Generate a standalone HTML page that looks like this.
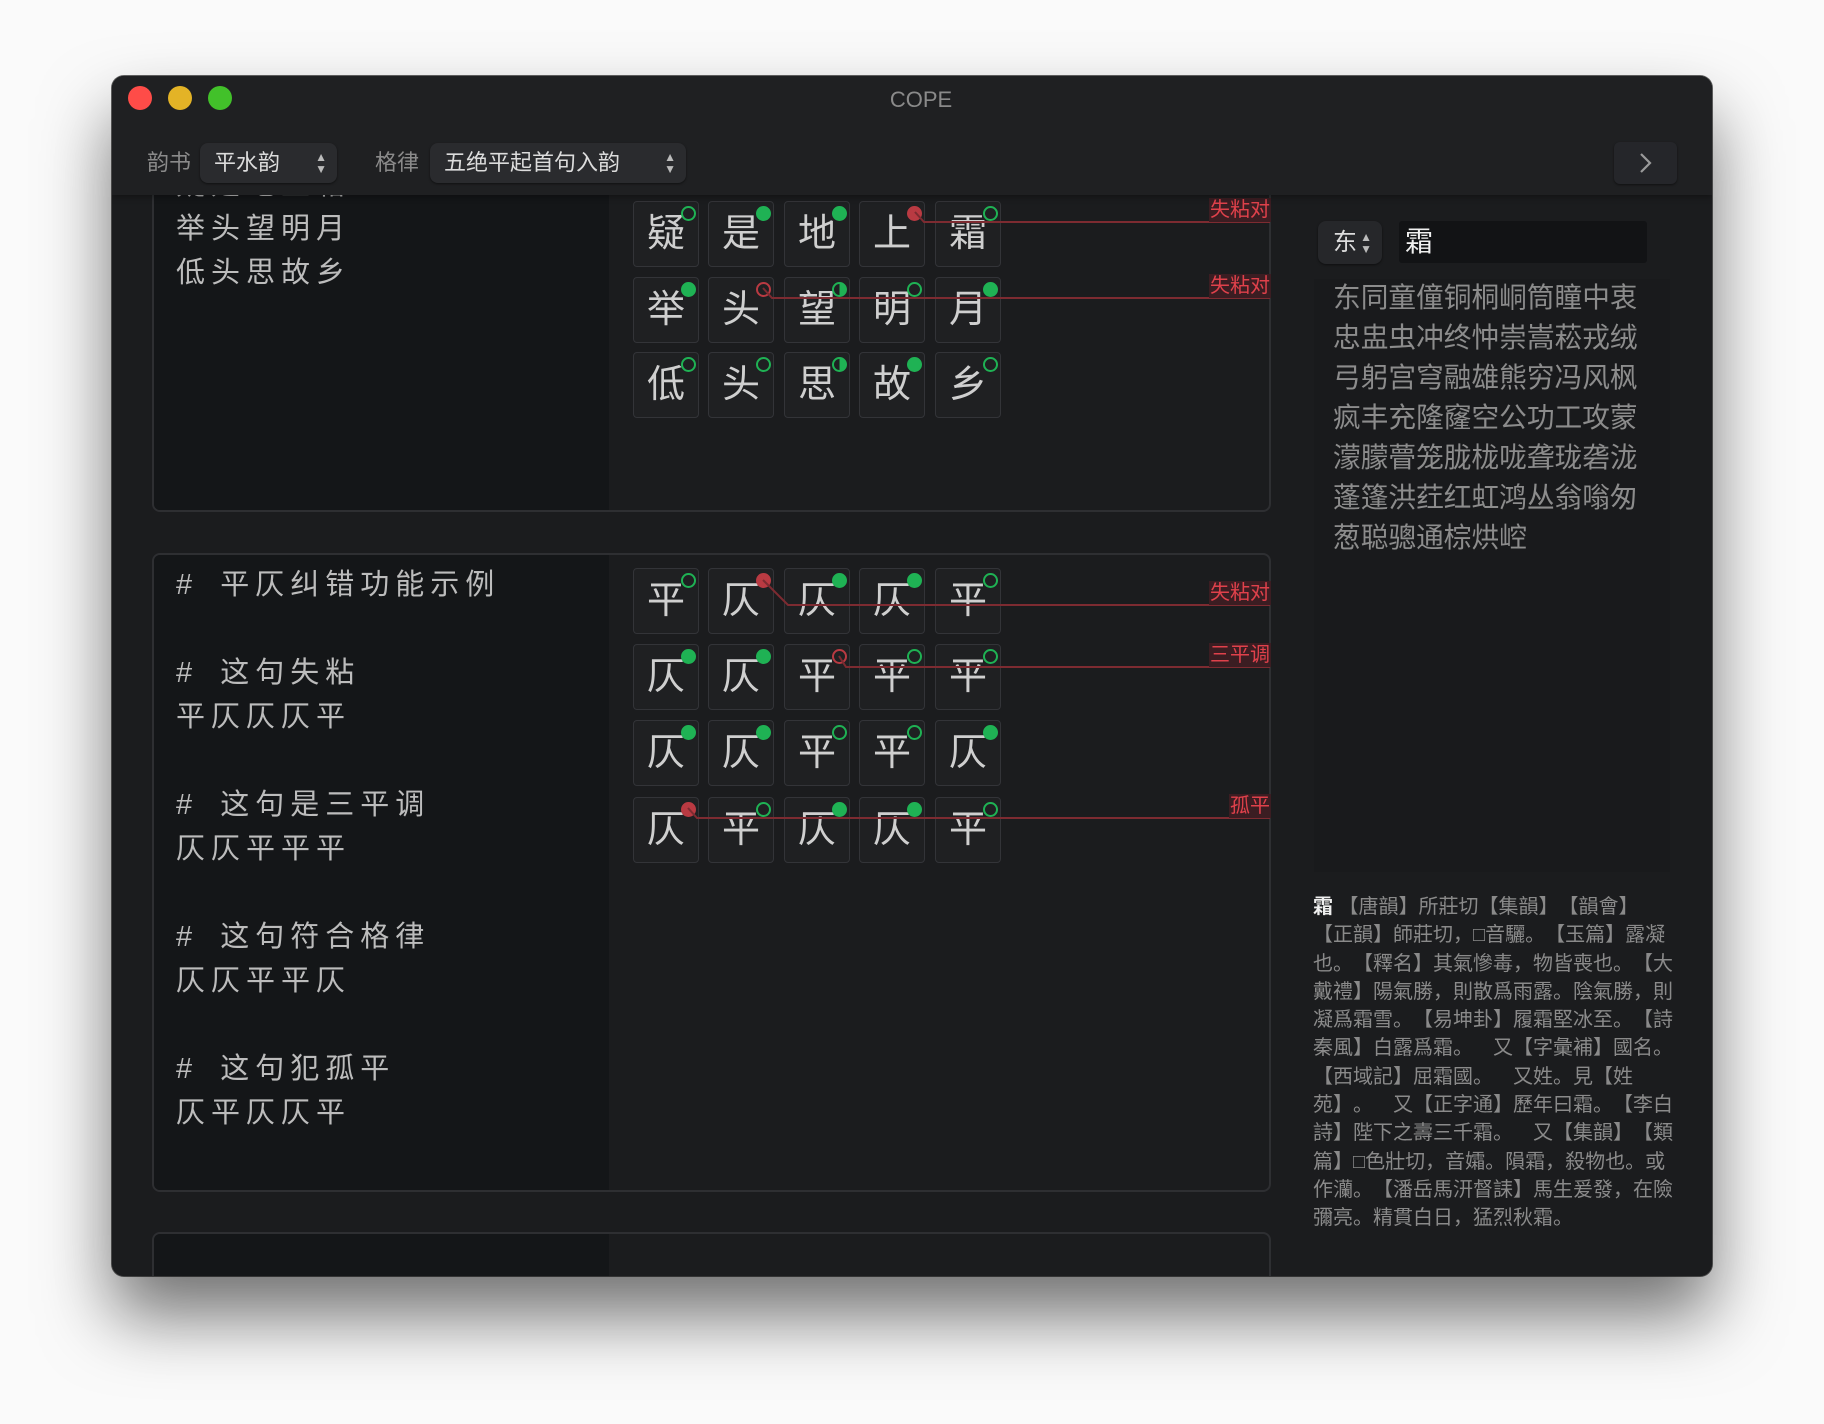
<!DOCTYPE html>
<html><head><meta charset="utf-8">
<style>
*{margin:0;padding:0;box-sizing:border-box}
body{width:1824px;height:1424px;background:#fafafa;position:relative;overflow:hidden;font-family:"Liberation Sans","Noto Sans CJK SC",sans-serif;text-spacing-trim:space-all}
.shadow{position:absolute;left:112px;top:76px;width:1600px;height:1200px;border-radius:12px;background:#1b1c1e;box-shadow:0 40px 70px rgba(0,0,0,.55),0 0 0 1px rgba(0,0,0,.6)}
.win{position:absolute;left:0;top:0;width:1824px;height:1424px;clip-path:inset(76px 112px 148px 112px round 12px);background:#1b1c1e}
.a{position:absolute}
.panel{position:absolute;left:152px;width:1119px;border:2px solid #2e2f32;border-radius:8px;background:#1b1c1e;overflow:hidden}
.panel .lc{position:absolute;left:0;top:0;bottom:0;width:455px;background:#141618}
.ltxt{position:absolute;left:22px;color:#bcbcbc;font-size:29px;line-height:44px;letter-spacing:6px;white-space:pre}
.s{letter-spacing:14px}
.c{position:absolute;width:66px;height:66px;background:#1f2022;border:1.5px solid #333438;border-radius:4px;color:#cfcfcf;font-size:38px;line-height:64px;text-align:center}
.c i{position:absolute;left:47px;top:4px;width:15px;height:15px;border-radius:50%}
.g{background:#1fb254}
.o{border:2.5px solid #1fb254}
.h{border:2.5px solid #1fb254;background:linear-gradient(to right,transparent 50%,#1fb254 50%)}
.r{background:#b93a42}
.ro{border:2.5px solid #b93a42}
.lab{position:absolute;right:553px;height:24px;background:#3b1d22;color:#e0414b;font-size:20px;line-height:24px;padding:0 1px}
.tb{position:absolute;left:112px;top:76px;width:1600px;height:119px;background:#1f2022;box-shadow:0 2px 6px rgba(0,0,0,.35);z-index:5}
.pop{position:absolute;height:40px;background:#2a2b2e;border-radius:8px;color:#dcdcdc;font-size:22px;line-height:40px;box-shadow:0 1px 2px rgba(0,0,0,.5)}
.arr{position:absolute;right:10px;top:8px;font-size:12px;line-height:12px;color:#bbb;text-align:center}
</style></head><body>
<div class="shadow"></div>
<div class="win">

<div class="panel" style="top:100px;height:412px">
  <div class="lc"></div>
  <div class="ltxt" style="top:17px">床前明月光
疑是地上霜
举头望明月
低头思故乡</div>
</div>
<div class="panel" style="top:553px;height:639px">
  <div class="lc"></div>
  <div class="ltxt" style="top:8px">#<span class="s"> </span>平仄纠错功能示例

#<span class="s"> </span>这句失粘
平仄仄仄平

#<span class="s"> </span>这句是三平调
仄仄平平平

#<span class="s"> </span>这句符合格律
仄仄平平仄

#<span class="s"> </span>这句犯孤平
仄平仄仄平</div>
</div>
<div class="panel" style="top:1232px;height:120px"><div class="lc"></div></div>

<div class="c" style="left:633px;top:125px">床<i class="o"></i></div>
<div class="c" style="left:708px;top:125px">前<i class="o"></i></div>
<div class="c" style="left:784px;top:125px">明<i class="o"></i></div>
<div class="c" style="left:859px;top:125px">月<i class="g"></i></div>
<div class="c" style="left:935px;top:125px">光<i class="o"></i></div>

<div class="c" style="left:633px;top:201px">疑<i class="o"></i></div>
<div class="c" style="left:708px;top:201px">是<i class="g"></i></div>
<div class="c" style="left:784px;top:201px">地<i class="g"></i></div>
<div class="c" style="left:859px;top:201px">上<i class="r"></i></div>
<div class="c" style="left:935px;top:201px">霜<i class="o"></i></div>

<div class="c" style="left:633px;top:277px">举<i class="g"></i></div>
<div class="c" style="left:708px;top:277px">头<i class="ro"></i></div>
<div class="c" style="left:784px;top:277px">望<i class="h"></i></div>
<div class="c" style="left:859px;top:277px">明<i class="o"></i></div>
<div class="c" style="left:935px;top:277px">月<i class="g"></i></div>

<div class="c" style="left:633px;top:352px">低<i class="o"></i></div>
<div class="c" style="left:708px;top:352px">头<i class="o"></i></div>
<div class="c" style="left:784px;top:352px">思<i class="h"></i></div>
<div class="c" style="left:859px;top:352px">故<i class="g"></i></div>
<div class="c" style="left:935px;top:352px">乡<i class="o"></i></div>

<div class="c" style="left:633px;top:568px">平<i class="o"></i></div>
<div class="c" style="left:708px;top:568px">仄<i class="r"></i></div>
<div class="c" style="left:784px;top:568px">仄<i class="g"></i></div>
<div class="c" style="left:859px;top:568px">仄<i class="g"></i></div>
<div class="c" style="left:935px;top:568px">平<i class="o"></i></div>

<div class="c" style="left:633px;top:644px">仄<i class="g"></i></div>
<div class="c" style="left:708px;top:644px">仄<i class="g"></i></div>
<div class="c" style="left:784px;top:644px">平<i class="ro"></i></div>
<div class="c" style="left:859px;top:644px">平<i class="o"></i></div>
<div class="c" style="left:935px;top:644px">平<i class="o"></i></div>

<div class="c" style="left:633px;top:720px">仄<i class="g"></i></div>
<div class="c" style="left:708px;top:720px">仄<i class="g"></i></div>
<div class="c" style="left:784px;top:720px">平<i class="o"></i></div>
<div class="c" style="left:859px;top:720px">平<i class="o"></i></div>
<div class="c" style="left:935px;top:720px">仄<i class="g"></i></div>

<div class="c" style="left:633px;top:797px">仄<i class="r"></i></div>
<div class="c" style="left:708px;top:797px">平<i class="o"></i></div>
<div class="c" style="left:784px;top:797px">仄<i class="g"></i></div>
<div class="c" style="left:859px;top:797px">仄<i class="g"></i></div>
<div class="c" style="left:935px;top:797px">平<i class="o"></i></div>

<svg class="a" style="left:0;top:0" width="1824" height="1424">
<g fill="none" stroke="#7d2b31" stroke-width="2">
<polyline points="915,212 924,222 1270,222"/>
<polyline points="763,288 772,298 1270,298"/>
<polyline points="763,580 788,605 1270,605"/>
<polyline points="839,656 846,667 1270,667"/>
<polyline points="688,808 697,818 1270,818"/>
</g></svg>
<div class="lab" style="top:198px">失粘对</div>
<div class="lab" style="top:274px">失粘对</div>
<div class="lab" style="top:581px">失粘对</div>
<div class="lab" style="top:643px">三平调</div>
<div class="lab" style="top:794px">孤平</div>

<div class="pop" style="left:1318px;top:221px;width:64px;height:43px;line-height:43px;font-size:24px;padding-left:15px;background:#26272a">东<div class="arr" style="top:10px">▲<br>▼</div></div>
<div class="a" style="left:1399px;top:221px;width:248px;height:42px;background:#121315;border-radius:3px;color:#f0f0f0;font-size:28px;line-height:42px;padding-left:6px">霜</div>
<div class="a" style="left:1314px;top:279px;width:356px;height:593px;background:#191a1c"></div>
<div class="a" style="left:1333px;top:278px;color:#8c8c8c;font-size:27.7px;line-height:40px;white-space:pre">东同童僮铜桐峒筒瞳中衷
忠盅虫冲终忡崇嵩菘戎绒
弓躬宫穹融雄熊穷冯风枫
疯丰充隆窿空公功工攻蒙
濛朦瞢笼胧栊咙聋珑砻泷
蓬篷洪荭红虹鸿丛翁嗡匆
葱聪骢通棕烘崆</div>
<div class="a" style="left:1313px;top:893px;color:#8a8a8a;font-size:20px;line-height:28.3px;white-space:pre"><b style="color:#eee">霜</b> 【唐韻】所莊切【集韻】【韻會】
【正韻】師莊切，□音驪。【玉篇】露凝
也。【釋名】其氣慘毒，物皆喪也。【大
戴禮】陽氣勝，則散爲雨露。陰氣勝，則
凝爲霜雪。【易坤卦】履霜堅冰至。【詩
秦風】白露爲霜。　又【字彙補】國名。
【西域記】屈霜國。　又姓。見【姓
苑】。　又【正字通】歷年曰霜。【李白
詩】陛下之壽三千霜。　又【集韻】【類
篇】□色壯切，音孀。隕霜，殺物也。或
作灡。【潘岳馬汧督誄】馬生爰發，在險
彌亮。精貫白日，猛烈秋霜。</div>

<div class="tb">
  <div class="a" style="left:16px;top:10px;width:24px;height:24px;border-radius:50%;background:#fe4c48"></div>
  <div class="a" style="left:56px;top:10px;width:24px;height:24px;border-radius:50%;background:#e3b326"></div>
  <div class="a" style="left:96px;top:10px;width:24px;height:24px;border-radius:50%;background:#42c12a"></div>
  <div class="a" style="left:0;width:1618px;top:11px;text-align:center;color:#8a8a8a;font-size:22px;line-height:26px">COPE</div>
  <div class="a" style="left:35px;top:67px;color:#8a8a8a;font-size:22px;line-height:40px">韵书</div>
  <div class="pop" style="left:88px;top:67px;width:137px;padding-left:14px">平水韵<div class="arr">▲<br>▼</div></div>
  <div class="a" style="left:263px;top:67px;color:#8a8a8a;font-size:22px;line-height:40px">格律</div>
  <div class="pop" style="left:318px;top:67px;width:256px;padding-left:14px">五绝平起首句入韵<div class="arr">▲<br>▼</div></div>
  <div class="a" style="left:1502px;top:66px;width:63px;height:42px;background:#25262a;border-radius:6px;box-shadow:0 1px 2px rgba(0,0,0,.5)">
    <svg width="63" height="42"><polyline points="27,12 36,21 27,30" fill="none" stroke="#9a9a9a" stroke-width="2.2"/></svg>
  </div>
</div>
</div>
</body></html>
